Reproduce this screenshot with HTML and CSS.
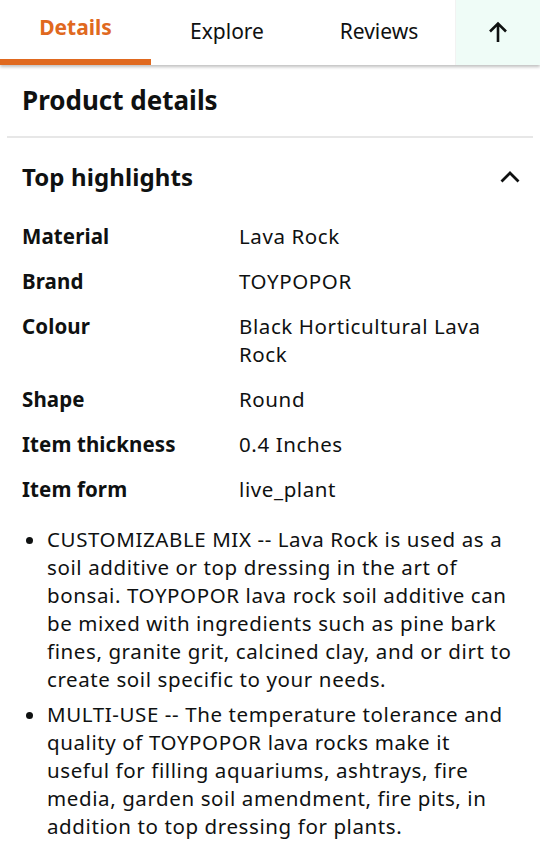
FILE: index.html
```html
<!DOCTYPE html>
<html lang="en">
<head>
<meta charset="utf-8">
<link rel="stylesheet" href="styles.css">
</head>
<body>
<nav class="tabs">
  <div class="tab active">Details</div>
  <div class="tab">Explore</div>
  <div class="tab">Reviews</div>
  <div class="tab-up">
    <svg width="20" height="22" viewBox="0 0 20 22"><path d="M10 21V2.5M2 10.5L10 2.5L18 10.5" fill="none" stroke="#0f1111" stroke-width="2.6"/></svg>
  </div>
</nav>
<main class="content">
  <h1 class="title">Product details</h1>
  <hr class="divider">
  <div class="section-head">
    <h2>Top highlights</h2>
    <svg class="chev" width="20" height="13" viewBox="0 0 20 13"><path d="M1.5 11.5L10 3L18.5 11.5" fill="none" stroke="#0f1111" stroke-width="2.8"/></svg>
  </div>
  <div class="specs">
    <div class="label">Material</div><div class="value">Lava Rock</div>
    <div class="label">Brand</div><div class="value">TOYPOPOR</div>
    <div class="label">Colour</div><div class="value">Black Horticultural Lava Rock</div>
    <div class="label">Shape</div><div class="value">Round</div>
    <div class="label">Item thickness</div><div class="value">0.4 Inches</div>
    <div class="label">Item form</div><div class="value">live_plant</div>
  </div>
  <ul class="bullets">
    <li>CUSTOMIZABLE MIX -- Lava Rock is used as a soil additive or top dressing in the art of bonsai. TOYPOPOR lava rock soil additive can be mixed with ingredients such as pine bark fines, granite grit, calcined clay, and or dirt to create soil specific to your needs.</li>
    <li>MULTI-USE -- The temperature tolerance and quality of TOYPOPOR lava rocks make it useful for filling aquariums, ashtrays, fire media, garden soil amendment, fire pits, in addition to top dressing for plants.</li>
  </ul>
</main>
</body>
</html>
```
FILE: styles.css
```css
* { box-sizing: border-box; }
html, body { margin: 0; padding: 0; background: #fff; }
body {
  font-family: "Noto Sans", "Open Sans", sans-serif;
  color: #0f1111;
  width: 540px;
  overflow: hidden;
}
.tabs {
  display: flex;
  height: 65px;
  box-shadow: 0 2px 3px rgba(0,0,0,0.25);
  position: relative;
  z-index: 1;
  background: #fff;
}
.tab {
  display: flex;
  align-items: center;
  justify-content: center;
  font-size: 21px;
  padding-bottom: 4px;
  color: #0f1111;
}
.tab:nth-child(1) { width: 151px; }
.tab:nth-child(2) { width: 152px; }
.tab:nth-child(3) { width: 152px; }
.tab.active {
  color: #e0691f;
  font-weight: 700;
  border-bottom: 6px solid #e0691f;
  padding-bottom: 6px;
}
.tab-up {
  flex: 1;
  background: #effcf7;
  border-left: 1px solid #f2f2f2;
  display: flex;
  align-items: center;
  justify-content: center;
  padding-bottom: 2px;
}
.title {
  margin: 0;
  font-size: 26px;
  font-weight: 700;
  padding: 17px 22px 0;
  line-height: 36px;
}
.divider {
  border: 0;
  height: 2px;
  background: #e7e7e7;
  margin: 18px 7px 0;
}
.section-head {
  display: flex;
  align-items: center;
  justify-content: space-between;
  padding: 22px 20px 0 22px;
}
.section-head h2 {
  margin: 0;
  font-size: 24px;
  font-weight: 700;
  line-height: 34px;
  letter-spacing: 0.1px;
}
.chev { margin-top: -2px; }
.specs {
  display: grid;
  grid-template-columns: 217px 1fr;
  row-gap: 17px;
  padding: 28px 22px 0;
  font-size: 20.5px;
  line-height: 28px;
}
.label { font-weight: 700; letter-spacing: 0.1px; }
.value { padding-right: 10px; letter-spacing: 0.6px; }
.bullets {
  margin: 0;
  padding: 22px 22px 0 47px;
  font-size: 20.5px;
  letter-spacing: 0.6px;
  line-height: 28px;
}
.bullets li { margin-bottom: 7px; }
```
